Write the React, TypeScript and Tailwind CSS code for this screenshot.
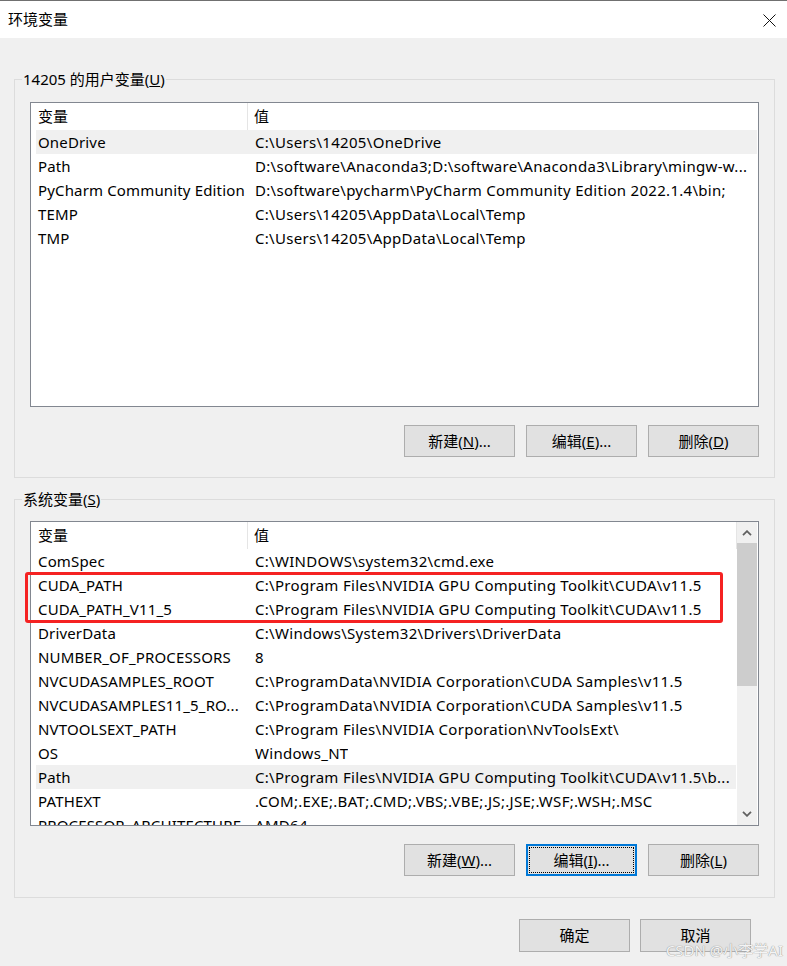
import React from 'react';

type Row = { name: string; value: string; selected?: boolean };

const userVars: Row[] = [
  { name: 'OneDrive', value: 'C:\\Users\\14205\\OneDrive', selected: true },
  { name: 'Path', value: 'D:\\software\\Anaconda3;D:\\software\\Anaconda3\\Library\\mingw-w...' },
  { name: 'PyCharm Community Edition', value: 'D:\\software\\pycharm\\PyCharm Community Edition 2022.1.4\\bin;' },
  { name: 'TEMP', value: 'C:\\Users\\14205\\AppData\\Local\\Temp' },
  { name: 'TMP', value: 'C:\\Users\\14205\\AppData\\Local\\Temp' },
];

const sysVars: Row[] = [
  { name: 'ComSpec', value: 'C:\\WINDOWS\\system32\\cmd.exe' },
  { name: 'CUDA_PATH', value: 'C:\\Program Files\\NVIDIA GPU Computing Toolkit\\CUDA\\v11.5' },
  { name: 'CUDA_PATH_V11_5', value: 'C:\\Program Files\\NVIDIA GPU Computing Toolkit\\CUDA\\v11.5' },
  { name: 'DriverData', value: 'C:\\Windows\\System32\\Drivers\\DriverData' },
  { name: 'NUMBER_OF_PROCESSORS', value: '8' },
  { name: 'NVCUDASAMPLES_ROOT', value: 'C:\\ProgramData\\NVIDIA Corporation\\CUDA Samples\\v11.5' },
  { name: 'NVCUDASAMPLES11_5_RO...', value: 'C:\\ProgramData\\NVIDIA Corporation\\CUDA Samples\\v11.5' },
  { name: 'NVTOOLSEXT_PATH', value: 'C:\\Program Files\\NVIDIA Corporation\\NvToolsExt\\' },
  { name: 'OS', value: 'Windows_NT' },
  { name: 'Path', value: 'C:\\Program Files\\NVIDIA GPU Computing Toolkit\\CUDA\\v11.5\\b...', selected: true },
  { name: 'PATHEXT', value: '.COM;.EXE;.BAT;.CMD;.VBS;.VBE;.JS;.JSE;.WSF;.WSH;.MSC' },
  { name: 'PROCESSOR_ARCHITECTURE', value: 'AMD64' },
];

function ListRows({ rows }: { rows: Row[] }) {
  return (
    <div className="ml-[5px] mr-[1px]">
      {rows.map((r) => (
        <div
          key={r.name + r.value}
          className={`flex h-[24px] items-center whitespace-nowrap ${r.selected ? 'bg-[#f0f0f0]' : ''}`}
        >
          <div className="w-[212px] shrink-0 overflow-hidden pl-[2px] tracking-[0.15px]">{r.name}</div>
          <div className="overflow-hidden pl-[7px] tracking-[0.3px]">{r.value}</div>
        </div>
      ))}
    </div>
  );
}

function Header() {
  return (
    <div className="flex h-[27px] items-center">
      <div className="flex h-full w-[217px] shrink-0 items-center border-r border-[#e5e5e5] pl-[7px]">变量</div>
      <div className="pl-[6px]">值</div>
    </div>
  );
}

function Btn({ label, k, tail = '', focused = false }: { label: string; k: string; tail?: string; focused?: boolean }) {
  return (
    <div
      className={`flex h-[32px] w-[111px] items-center justify-center bg-[#e1e1e1] ${
        focused ? 'border-2 border-[#0078d7] p-[1px]' : 'border border-[#adadad]'
      }`}
    >
      {focused ? (
        <div className="flex h-full w-full items-center justify-center border border-dotted border-black">
          {label}(<u>{k}</u>){tail}
        </div>
      ) : (
        <span>
          {label}(<u>{k}</u>){tail}
        </span>
      )}
    </div>
  );
}

export default function App() {
  return (
    <div className="relative h-[966px] w-[787px] overflow-hidden border-t border-[#707070] bg-[#f0f0f0] font-['Noto_Sans','Noto_Sans_CJK_SC',sans-serif] text-[15px] text-black">
      {/* title bar */}
      <div className="flex h-[37px] items-center justify-between bg-white pl-[8px] pr-[11px]">
        <span>环境变量</span>
        <svg width="13" height="13" viewBox="0 0 13 13" className="mt-[1px]">
          <path d="M0.5 0.5 L12.5 12.5 M12.5 0.5 L0.5 12.5" stroke="#111" strokeWidth="1" fill="none" />
        </svg>
      </div>

      {/* user vars */}
      <fieldset className="ml-[14px] mt-[31px] w-[761px] border border-[#dcdcdc] pb-[20px]">
        <legend className="ml-[7px] px-[1px] leading-[20px]">
          14205 的用户变量(<u>U</u>)
        </legend>
        <div className="ml-[15px] mt-[13px] h-[305px] w-[729px] border border-[#828790] bg-white">
          <Header />
          <ListRows rows={userVars} />
        </div>
        <div className="mr-[15px] mt-[18px] flex justify-end gap-[11px]">
          <Btn label="新建" k="N" tail="..." />
          <Btn label="编辑" k="E" tail="..." />
          <Btn label="删除" k="D" />
        </div>
      </fieldset>

      {/* system vars */}
      <fieldset className="ml-[14px] mt-[11px] w-[761px] border border-[#dcdcdc] pb-[21px]">
        <legend className="ml-[7px] px-[1px] leading-[20px]">
          系统变量(<u>S</u>)
        </legend>
        <div className="ml-[15px] mt-[12px] flex h-[305px] w-[729px] overflow-hidden border border-[#828790] bg-white">
          <div className="w-[706px] overflow-hidden">
            <div className="border-r border-[#e5e5e5]">
              <Header />
            </div>
            <ListRows rows={sysVars} />
          </div>
          <div className="mr-[1px] flex w-[20px] flex-col bg-[#f0f0f0]">
            <div className="flex h-[21px] items-center justify-center">
              <svg width="10" height="6" viewBox="0 0 10 6">
                <path d="M1 5.2 L5 1.2 L9 5.2" stroke="#606060" strokeWidth="1.8" fill="none" />
              </svg>
            </div>
            <div className="h-[143px] bg-[#cdcdcd]" />
            <div className="flex-1" />
            <div className="flex h-[22px] items-center justify-center">
              <svg width="10" height="6" viewBox="0 0 10 6">
                <path d="M1 0.8 L5 4.8 L9 0.8" stroke="#606060" strokeWidth="1.8" fill="none" />
              </svg>
            </div>
          </div>
        </div>
        <div className="mr-[15px] mt-[18px] flex justify-end gap-[11px]">
          <Btn label="新建" k="W" tail="..." />
          <Btn label="编辑" k="I" tail="..." focused />
          <Btn label="删除" k="L" />
        </div>
      </fieldset>

      {/* dialog buttons */}
      <div className="mr-[36px] mt-[21px] flex justify-end gap-[10px]">
        <div className="flex h-[33px] w-[111px] items-center justify-center border border-[#adadad] bg-[#e1e1e1]">确定</div>
        <div className="flex h-[33px] w-[111px] items-center justify-center border border-[#adadad] bg-[#e1e1e1]">取消</div>
      </div>

      {/* red highlight annotation */}
      <div className="absolute left-[25px] top-[571px] h-[51px] w-[698px] rounded-[3px] border-[3px] border-[#f52222]" />

      {/* watermark */}
      <div className="absolute bottom-[5px] right-[4px] whitespace-nowrap text-[15px] text-[#f4f4f4] [text-shadow:0_0_1px_#9a9a9a,0_0_1px_#9a9a9a]">
        CSDN @小李学AI
      </div>
    </div>
  );
}
